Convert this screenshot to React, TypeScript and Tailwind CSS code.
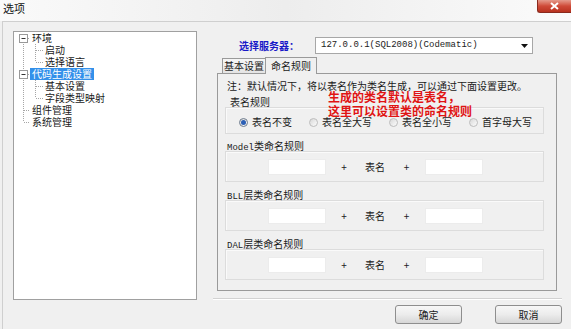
import React from "react";

const CJK = "font-['Noto_Sans_CJK_SC',sans-serif]";
const MONO = "font-['Liberation_Mono','Noto_Sans_CJK_SC',monospace]";

type Row = { label: string; level: number; selected?: boolean };
const rows: Row[] = [
  { label: "环境", level: 0 },
  { label: "启动", level: 1 },
  { label: "选择语言", level: 1 },
  { label: "代码生成设置", level: 0, selected: true },
  { label: "基本设置", level: 1 },
  { label: "字段类型映射", level: 1 },
  { label: "组件管理", level: 0 },
  { label: "系统管理", level: 0 },
];

function TreeLines() {
  const c = "#a6a6a6";
  const dash = "1 1";
  const box = (cy: number) => (
    <g key={cy}>
      <rect x={5.5} y={cy - 4} width={8} height={8} fill="#fff" stroke="#999" />
      <line x1={7.5} x2={11.5} y1={cy} y2={cy} stroke="#333" />
    </g>
  );
  return (
    <svg className="absolute left-0 top-0" width="182" height="120">
      <line x1={9.5} x2={9.5} y1={6} y2={90} stroke={c} strokeDasharray={dash} />
      {[6.5, 42.5, 78.5, 90.5].map((y) => (
        <line key={y} x1={10} x2={16} y1={y} y2={y} stroke={c} strokeDasharray={dash} />
      ))}
      <line x1={21.5} x2={21.5} y1={12} y2={30} stroke={c} strokeDasharray={dash} />
      <line x1={21.5} x2={21.5} y1={48} y2={66} stroke={c} strokeDasharray={dash} />
      {[18.5, 30.5, 54.5, 66.5].map((y) => (
        <line key={y} x1={22} x2={29} y1={y} y2={y} stroke={c} strokeDasharray={dash} />
      ))}
      {box(6.5)}
      {box(42.5)}
    </svg>
  );
}

function Radio({ checked, label, className = "" }: { checked?: boolean; label: string; className?: string }) {
  return (
    <div className={`flex items-center ${className}`}>
      <span
        className={`w-[9px] h-[9px] rounded-full border flex items-center justify-center bg-gradient-to-br from-[#d8d8d8] to-[#fdfdfd] ${
          checked ? "border-[#6c7a8c]" : "border-[#bdbdbd]"
        }`}
      >
        {checked && <span className="w-[5px] h-[5px] rounded-full bg-[#2c5fb5]" />}
      </span>
      <span className="ml-[4px] text-[10px] leading-[12px]">{label}</span>
    </div>
  );
}

function NameGroup({ label, className = "" }: { label: React.ReactNode; className?: string }) {
  return (
    <div className={className}>
      <div className="h-[12px] leading-[12px] pl-[9px] text-[10px]">{label}</div>
      <div className="ml-[7px] -mt-[1px] w-[319px] h-[31px] border border-[#dcdcdc] shadow-[inset_1px_1px_0_#fafafa] flex items-center pl-[42px] text-[10px] leading-[12px]">
        <div className="w-[58px] h-[16px] bg-white border border-[#ececec]" />
        <span className="w-[36px] text-center">+</span>
        <span className="w-[26px] text-center">表名</span>
        <span className="w-[37px] text-center">+</span>
        <div className="w-[58px] h-[16px] bg-white border border-[#ececec]" />
      </div>
    </div>
  );
}

export default function App() {
  return (
    <div className={`w-[571px] h-[329px] bg-[#f0f0f0] overflow-hidden text-[#1a1a1a] ${CJK}`}>
      {/* title bar */}
      <div className="h-[21px] flex justify-between bg-gradient-to-r from-[#fafafa] via-[#ededed] to-[#fbfbfb]">
        <span className="pl-[3px] pt-[2px] text-[11px] leading-[12px] text-[#111]">选项</span>
        <div className="w-[34px] h-[13px] rounded-bl-[3px] bg-gradient-to-b from-[#e49a8c] via-[#cf4a38] to-[#b8321f] border border-[#8a2a1e] border-t-0 border-r-0 flex items-center justify-center">
          <svg width="9" height="8" viewBox="0 0 9 8">
            <path d="M1 1 L8 7 M8 1 L1 7" stroke="#fff" strokeWidth="2" />
          </svg>
        </div>
      </div>

      {/* body */}
      <div className="ml-[2px] h-[308px] border-l border-t border-[#cfcfcf] flex pl-[10px] pt-[9px]">
        {/* tree */}
        <div className="relative w-[184px] h-[269px] border border-[#a0a0a0] bg-white text-[10px]">
          <TreeLines />
          <div className="relative">
            {rows.map((r) => (
              <div key={r.label} className={`h-[12px] leading-[12px] flex ${r.level === 0 ? "pl-[16px]" : "pl-[31px]"}`}>
                <span className={r.selected ? "bg-[#3390ea] text-white px-[2px]" : r.level === 0 ? "px-[2px]" : ""}>
                  {r.label}
                </span>
              </div>
            ))}
          </div>
        </div>

        {/* right column */}
        <div className="ml-[16px] w-[349px] flex flex-col">
          <div className="mt-[6px] h-[17px] flex items-center">
            <span className="ml-[26px] w-[76px] whitespace-nowrap text-[10px] font-bold text-[#1818c8] leading-[12px]">
              选择服务器：
            </span>
            <div className="w-[218px] h-[17px] border border-[#a7a7a7] bg-white flex items-center pl-[5px] pr-[3px]">
              <span className={`${MONO} text-[9px] text-[#222] whitespace-nowrap`}>127.0.0.1(SQL2008)(Codematic)</span>
              <svg className="ml-auto mr-[1px]" width="7" height="4" viewBox="0 0 7 4">
                <path d="M0 0 H7 L3.5 4 Z" fill="#111" />
              </svg>
            </div>
          </div>

          {/* tabs */}
          <div className="mt-[3px] h-[16px] pl-[9px] flex items-end text-[10px] leading-[12px]">
            <div className="w-[43px] h-[15px] border-l border-t border-[#9a9a9a] bg-gradient-to-b from-[#f6f6f6] to-[#e4e4e4] flex items-center justify-center">
              基本设置
            </div>
            <div className="relative z-10 w-[52px] h-[17px] -mb-[1px] border-l border-t border-r border-[#9a9a9a] bg-[#f0f0f0] flex items-center justify-center">
              命名规则
            </div>
          </div>

          <div className="relative ml-[4px] w-[340px] h-[218px] border border-[#9a9a9a] pt-[6px]">
            <div className="pl-[9px] text-[10px] leading-[12px] whitespace-nowrap">注：默认情况下，将以表名作为类名生成，可以通过下面设置更改。</div>

            <div className="mt-[4px]">
              <div className="h-[12px] leading-[12px] pl-[12px] text-[10px]">表名规则</div>
              <div className="ml-[7px] -mt-[1px] w-[319px] h-[27px] border border-[#dcdcdc] shadow-[inset_1px_1px_0_#fafafa] flex items-center pt-[3px] pl-[13px] gap-[17px]">
                <Radio checked label="表名不变" />
                <Radio label="表名全大写" />
                <Radio label="表名全小写" />
                <Radio label="首字母大写" />
              </div>
            </div>

            <NameGroup
              className="mt-[6px]"
              label={
                <>
                  <span className={`${MONO} text-[9px]`}>Model</span>类命名规则
                </>
              }
            />
            <NameGroup
              className="mt-[7px]"
              label={
                <>
                  <span className={`${MONO} text-[9px]`}>BLL</span>层类命名规则
                </>
              }
            />
            <NameGroup
              className="mt-[7px]"
              label={
                <>
                  <span className={`${MONO} text-[9px]`}>DAL</span>层类命名规则
                </>
              }
            />

            {/* red annotation */}
            <div className="absolute left-[110px] top-[16px] text-[12px] leading-[14px] font-bold text-[#e01414] whitespace-nowrap">
              <div>生成的类名默认是表名，</div>
              <div>这里可以设置类的命名规则</div>
            </div>
          </div>

          <div className="mt-[7px] h-0 border-t border-[#d2d2d2] border-b border-b-white" />

          <div className="mt-[5px] flex justify-end gap-[33px] text-[10px]">
            <button className="w-[67px] h-[19px] rounded-[3px] border border-[#8e8e8e] bg-gradient-to-b from-[#f7f7f7] via-[#ececec] to-[#d6d6d6] flex items-center justify-center leading-[12px]">
              确定
            </button>
            <button className="w-[67px] h-[19px] rounded-[3px] border border-[#8e8e8e] bg-gradient-to-b from-[#f7f7f7] via-[#ececec] to-[#d6d6d6] flex items-center justify-center leading-[12px]">
              取消
            </button>
          </div>
        </div>
      </div>
    </div>
  );
}
